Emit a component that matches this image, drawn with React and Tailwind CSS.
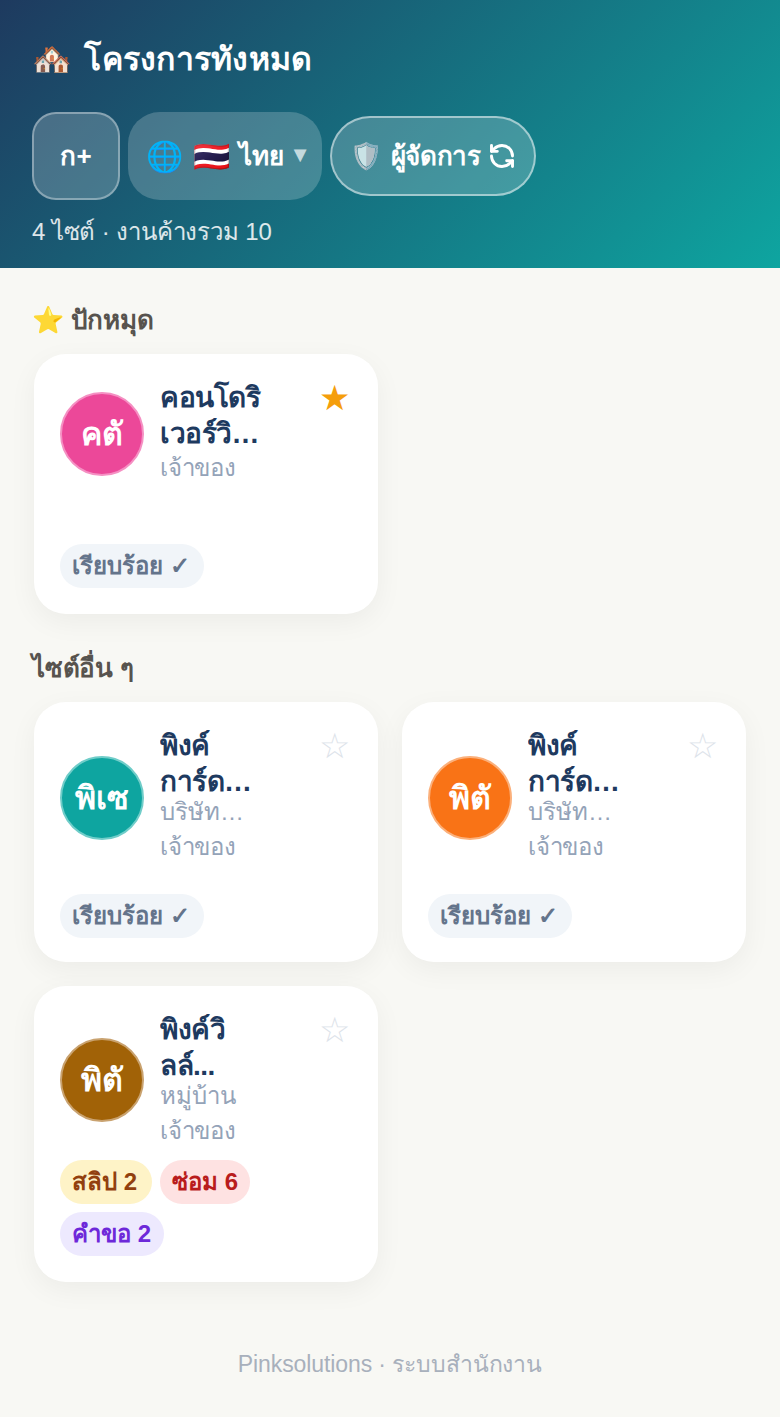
import React from 'react';
import { RefreshCcw } from 'lucide-react';

const OK_BADGE = [{ label: 'เรียบร้อย ✓', cls: 'bg-[#f1f5f9] pr-[14px] text-[#64748b]' }];

const PINNED = [
    { initials: 'คตั', color: 'bg-[#ec4899]', ring: 'border-[#f590c3]', name: 'คอนโดริเวอร์วิวทาวเวอร์', subs: [], pad: 'pb-[4px]', pinned: true, badges: OK_BADGE },
];

const OTHERS = [
    { initials: 'พิเซ', color: 'bg-[#0ea5a0]', ring: 'border-[#70cdc9]', name: 'พิงค์ การ์ดเด้นเซ็นทรัล', subs: ['บริษัทพิงค์โซลูชั่น'], pad: 'pb-[5px]', foot: '-mb-[2px]', badges: OK_BADGE },
    { initials: 'พิตั', color: 'bg-[#f97316]', ring: 'border-[#fbb07b]', name: 'พิงค์ การ์ดเด้นเซ็นทรัล', subs: ['บริษัทพิงค์โซลูชั่น'], pad: 'pb-[5px]', foot: '-mb-[2px]', badges: OK_BADGE },
    {
        initials: 'พิตั', color: 'bg-[#a16207]', ring: 'border-[#c9a26f]', name: 'พิงค์วิ\nลล์...', subs: ['หมู่บ้าน'], pad: 'pb-[1px]', foot: '',
        badges: [
            { label: 'สลิป 2', cls: 'bg-[#fef3c7] pr-[15px] text-[#92400e]' },
            { label: 'ซ่อม 6', cls: 'bg-[#fee2e2] pr-3 text-[#b91c1c]' },
            { label: 'คำขอ 2', cls: 'bg-[#ede9fe] pr-[13px] text-[#6d28d9]' },
        ],
    },
];

function SiteCard({ site }) {
    return (
        <div className="flex min-h-[260px] flex-col justify-between gap-3 rounded-[32px] bg-white p-[26px] shadow-[0_8px_28px_rgba(0,0,0,0.05)]">
            <div className="flex items-center gap-4">
                <div className={`flex h-[84px] w-[84px] shrink-0 items-center justify-center rounded-full border-2 text-[32px] font-bold text-white ${site.color} ${site.ring}`}>
                    {site.initials}
                </div>
                <div className={`w-[108px] min-w-0 ${site.pad}`}>
                    <div className="line-clamp-2 text-[28px] leading-[36px] font-bold tracking-[-0.5px] whitespace-pre-line text-[#1e3a5f]">{site.name}</div>
                    {site.subs.map(sub => (
                        <div key={sub} className="-mt-[4px] mb-[3px] max-w-[92px] truncate text-[24px] leading-[32px] text-[#94a3b8]">{sub}</div>
                    ))}
                    <div className="text-[24px] leading-[32px] tracking-[-0.2px] text-[#94a3b8]">เจ้าของ</div>
                </div>
                <div className={`ml-auto w-[36px] shrink-0 self-start text-center text-[35px] leading-[36px] ${site.pinned ? 'text-[#f59e0b]' : 'text-[#dde3ea]'}`}>
                    {site.pinned ? '★' : '☆'}
                </div>
            </div>
            <div className={`flex flex-wrap gap-2 ${site.foot || ''}`}>
                {site.badges.map(b => (
                    <span key={b.label} className={`rounded-full py-[6px] pl-3 text-[24px] leading-[32px] font-bold ${b.cls}`}>{b.label}</span>
                ))}
            </div>
        </div>
    );
}

export default function App() {
    return (
        <div className="min-h-[1417px] bg-[#f8f8f4] font-['Liberation_Sans',sans-serif]">
            <header className="h-[268px] bg-[linear-gradient(135deg,#1e3a5f,#0ea5a0)] px-8 pt-[32px] text-white">
                <h1 className="text-[32px] leading-[54px] font-bold tracking-[0.25px]"><span className="mr-[3px]">🏘️</span> โครงการทังหมด</h1>
                <div className="mt-[26px] flex items-center gap-2">
                    <button className="h-[88px] w-[88px] rounded-[24px] border-2 border-white/35 bg-white/20 text-[26px] font-bold">ก+</button>
                    <div className="flex h-[88px] w-[194px] items-center justify-center rounded-[32px] bg-white/20 pl-[7px] text-[26px] font-bold">
                        <span className="text-[30px] [word-spacing:2px]">🌐 🇹🇭</span>
                        <span className="ml-[9px]">ไทย</span>
                        <span className="mb-[4px] ml-[5px] text-[22px] text-white/70">▼</span>
                    </div>
                    <button className="flex h-[80px] items-center gap-[6px] rounded-full border-2 border-white/50 bg-white/20 px-[18px] text-[26px] font-bold tracking-[-0.3px] [word-spacing:2px]">
                        <span className="mr-[1px]">🛡️ ผู้จัดการ</span>
                        <RefreshCcw size={28} strokeWidth={2.5} />
                    </button>
                </div>
                <p className="mt-[12px] text-[24px] leading-[40px] tracking-[-0.15px] text-white/85">4 ไซต์ · งานค้างรวม 10</p>
            </header>
            <main className="px-8 pt-[32px]">
                <h2 className="text-[26px] leading-[40px] font-bold tracking-[-0.25px] text-[#57534e]">⭐ ปักหมุด</h2>
                <div className="mt-[14px] grid grid-cols-2 gap-6 px-[2px]">
                    {PINNED.map((s, i) => <SiteCard key={i} site={s} />)}
                </div>
                <h2 className="mt-[34px] text-[26px] leading-[40px] font-bold tracking-[-0.25px] text-[#57534e]">ไซต์อื่น ๆ</h2>
                <div className="mt-[14px] grid grid-cols-2 gap-6 px-[2px]">
                    {OTHERS.map((s, i) => <SiteCard key={i} site={s} />)}
                </div>
            </main>
            <footer className="pt-[64px] text-center text-[23px] leading-[36px] tracking-[-0.1px] text-[#a8b0bc]">Pinksolutions · ระบบสำนักงาน</footer>
        </div>
    );
}
